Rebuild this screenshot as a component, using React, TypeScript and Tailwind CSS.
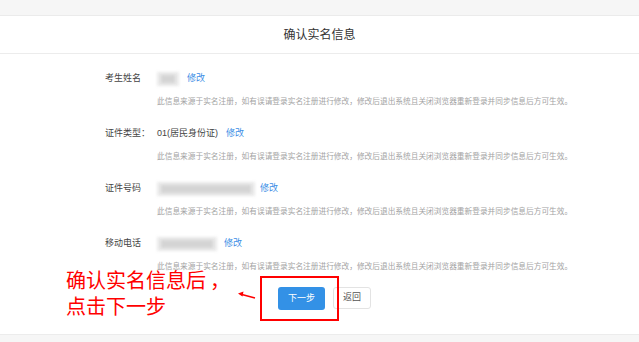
import React from "react";

const DESC =
  "此信息来源于实名注册，如有误请登录实名注册进行修改，修改后退出系统且关闭浏览器重新登录并同步信息后方可生效。";

function Blur({ w }: { w: number }) {
  return (
    <span className="relative inline-block h-[14px]" style={{ width: w }}>
      <span className="absolute inset-0 bg-[#e9e9e9] blur-[1.5px]" />
      <span className="absolute left-[4px] right-[4px] top-[3px] bottom-[3px] bg-[#d4d4d4] blur-[1.5px]" />
    </span>
  );
}

function Row({
  label,
  value,
  linkGap = 8,
}: {
  label: string;
  value: React.ReactNode;
  linkGap?: number;
}) {
  return (
    <div className="flex flex-col">
      <div className="flex h-[14px] items-center text-[9px] text-[#444]">
        <span className="w-[52px] shrink-0">{label}</span>
        <span className="flex items-center">{value}</span>
        <span className="text-[#3c8ee6]" style={{ marginLeft: linkGap }}>
          修改
        </span>
      </div>
      <div className="mt-[10px] h-[12px] pl-[52px] text-[7.7px] leading-[12px] text-[#a3a3a3] whitespace-nowrap">
        {DESC}
      </div>
    </div>
  );
}

export default function App() {
  return (
    <div
      className="flex h-[342px] w-[639px] flex-col overflow-hidden bg-white"
      style={{ fontFamily: '"Liberation Sans", "Noto Sans CJK SC", sans-serif' }}
    >
      <div className="h-[16px] shrink-0 border-b border-[#ebebeb] bg-[#f6f6f6]" />
      <div className="flex h-[38px] shrink-0 items-center justify-center border-b border-[#ececec] text-[12px] text-[#333]">
        确认实名信息
      </div>
      <div className="flex flex-1 flex-col pl-[105px] pt-[18px]">
        <div className="flex flex-col gap-[19px]">
          <Row label="考生姓名" value={<Blur w={22} />} linkGap={8} />
          <Row label="证件类型：" value={<span>01(居民身份证)</span>} linkGap={8} />
          <Row label="证件号码" value={<Blur w={98} />} linkGap={5} />
          <Row label="移动电话" value={<Blur w={60} />} linkGap={7} />
        </div>
        <div className="relative ml-[173px] mt-[14px] flex items-start gap-[8px]">
          <div className="flex h-[23px] w-[47px] items-center justify-center rounded-[3px] bg-[#3391e6] text-[9px] text-white">
            下一步
          </div>
          <div className="flex h-[22px] w-[38px] items-center justify-center rounded-[3px] border border-[#e3e3e3] bg-white text-[9px] text-[#555]">
            返回
          </div>
          {/* annotation overlay */}
          <div className="absolute left-[-18px] top-[-11px] h-[45px] w-[79px] border-2 border-[#f00]" />
          <svg
            className="absolute left-[-41px] top-[3px]"
            width="20"
            height="10"
            viewBox="0 0 20 10"
          >
            <path d="M18 8 L3 4" stroke="#f00" strokeWidth="1.6" fill="none" />
            <path d="M1 3.5 L6.5 1.5 L5.5 6.5 Z" fill="#f00" />
          </svg>
          <div
            className="absolute left-[-212px] top-[-17px] flex flex-col gap-[6px] whitespace-nowrap text-[20px] leading-[20px] text-[#f00]"
            style={{ fontFamily: '"Noto Sans CJK SC", sans-serif' }}
          >
            <div className="h-[20px]">确认实名信息后&#8201;，</div>
            <div className="h-[20px]">点击下一步</div>
          </div>
        </div>
      </div>
      <div className="h-[8px] shrink-0 border-t border-[#ececec] bg-[#f6f6f6]" />
    </div>
  );
}
